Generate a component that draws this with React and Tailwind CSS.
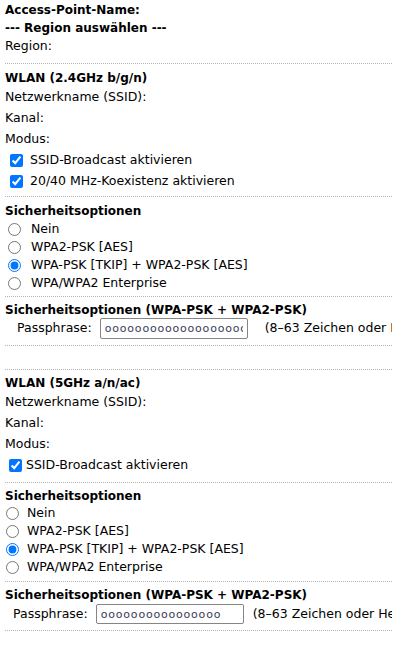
import React from 'react';

const font = { fontFamily: 'Tahoma, "DejaVu Sans", Verdana, sans-serif' };

const Line = ({ className = '' }) => (
    <div className={`border-t border-dotted border-[#b4b4b4] ${className}`}></div>
);

const Row = ({ h = 'h-[21px]', bold, className = '', children }) => (
    <div className={`flex items-center whitespace-nowrap ${h} ${bold ? 'font-bold text-[12px]' : ''} ${className}`}>
        {children}
    </div>
);

const Check = ({ label, compact }) => (
    <Row>
        <input
            type="checkbox"
            defaultChecked
            className={`m-0 h-[13px] w-[13px] shrink-0 accent-[#0075ff] ${compact ? 'ml-[4px] mr-[4px]' : 'ml-[5px] mr-[7px]'}`}
        />
        <span>{label}</span>
    </Row>
);

const Radio = ({ label, checked, name, compact }) => (
    <Row h="h-[18px]">
        <input
            type="radio"
            name={name}
            defaultChecked={checked}
            className={`m-0 h-[13px] w-[13px] shrink-0 accent-[#0075ff] ${compact ? 'ml-[1px] mr-[8px]' : 'ml-[3px] mr-[10px]'}`}
        />
        <span>{label}</span>
    </Row>
);

const Passphrase = ({ value, compact }) => (
    <div className={`flex items-center whitespace-nowrap ${compact ? 'h-[20px] mt-[1px] pl-[8px]' : 'h-[21px] pl-[12px]'}`}>
        <span className="mr-[8px]">Passphrase:</span>
        <input
            type="text"
            readOnly
            value={value}
            className={`w-[148px] shrink-0 rounded-[2px] border border-[#858585] bg-white px-[4px] text-[11px] tracking-[0.8px] text-[#3c3c5a] outline-none ${compact ? 'h-[20px]' : 'h-[21px]'}`}
            style={font}
        />
        <span className={compact ? 'ml-[9px]' : 'ml-[17px]'}>(8–63 Zeichen oder Hexadezimal)</span>
    </div>
);

export default function App() {
    return (
        <div className="min-h-screen bg-white">
            <div className="ml-[5px] w-[387px] overflow-hidden pt-[1px] text-[12.5px] text-black" style={font}>
                {/* Kopf */}
                <Row h="h-[18px]" bold>Access-Point-Name:</Row>
                <Row h="h-[18px]" bold>--- Region auswählen ---</Row>
                <Row h="h-[18px]">Region:</Row>
                <Line className="mt-[8px]" />

                {/* WLAN 2.4 GHz */}
                <Row h="h-[18px]" bold className="mt-[5px]">WLAN (2.4GHz b/g/n)</Row>
                <Row>Netzwerkname (SSID):</Row>
                <Row>Kanal:</Row>
                <Row>Modus:</Row>
                <Check label="SSID-Broadcast aktivieren" />
                <Check label="20/40 MHz-Koexistenz aktivieren" />
                <Line className="mt-[4px]" />

                <Row h="h-[18px]" bold className="mt-[5px]">Sicherheitsoptionen</Row>
                <Radio name="sec24" label="Nein" />
                <Radio name="sec24" label="WPA2-PSK [AES]" />
                <Radio name="sec24" label="WPA-PSK [TKIP] + WPA2-PSK [AES]" checked />
                <Radio name="sec24" label="WPA/WPA2 Enterprise" />
                <Line className="mt-[4px]" />

                <Row h="h-[16px]" bold className="mt-[5px]">Sicherheitsoptionen (WPA-PSK + WPA2-PSK)</Row>
                <Passphrase value="oooooooooooooooooooooooo" />
                <Line className="mt-[6px]" />
                <div className="h-[23px]"></div>
                <Line />

                {/* WLAN 5 GHz */}
                <Row h="h-[18px]" bold className="mt-[4px]">WLAN (5GHz a/n/ac)</Row>
                <Row>Netzwerkname (SSID):</Row>
                <Row>Kanal:</Row>
                <Row>Modus:</Row>
                <Check label="SSID-Broadcast aktivieren" compact />
                <Line className="mt-[6px]" />

                <Row h="h-[17px]" bold className="mt-[4px]">Sicherheitsoptionen</Row>
                <Radio name="sec5" label="Nein" compact />
                <Radio name="sec5" label="WPA2-PSK [AES]" compact />
                <Radio name="sec5" label="WPA-PSK [TKIP] + WPA2-PSK [AES]" checked compact />
                <Radio name="sec5" label="WPA/WPA2 Enterprise" compact />
                <Line className="mt-[5px]" />

                <Row h="h-[16px]" bold className="mt-[5px]">Sicherheitsoptionen (WPA-PSK + WPA2-PSK)</Row>
                <Passphrase value="oooooooooooooooo" compact />
                <Line className="mt-[6px]" />
            </div>
        </div>
    );
}
